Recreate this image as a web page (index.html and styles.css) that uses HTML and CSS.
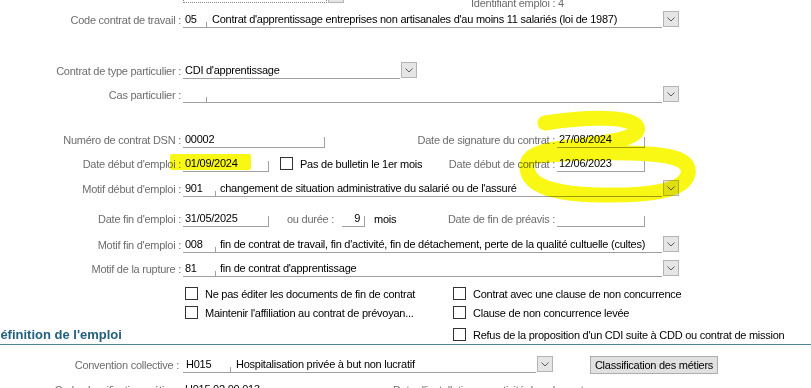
FILE: index.html
```html
<!DOCTYPE html>
<html>
<head>
  <title>Contrat - emploi</title>
  <link rel="stylesheet" href="styles.css">
</head>
<body>
  <div class="form">

    <div class="row row-top">
      <div class="label"></div>
      <div class="dotted"></div>
      <div class="drop"><svg width="8" height="5"><path d="M0.5 0.5 L4 4 L7.5 0.5" /></svg></div>
      <div class="ident">Identifiant emploi : 4</div>
    </div>

    <div class="row r1">
      <div class="label">Code contrat de travail :</div>
      <div class="f code code-sm">05</div>
      <div class="f desc">Contrat d'apprentissage entreprises non artisanales d'au moins 11 salariés (loi de 1987)</div>
      <div class="drop"><svg width="8" height="5"><path d="M0.5 0.5 L4 4 L7.5 0.5" /></svg></div>
    </div>

    <div class="row r2">
      <div class="label">Contrat de type particulier :</div>
      <div class="f type-part">CDI d'apprentissage</div>
      <div class="drop"><svg width="8" height="5"><path d="M0.5 0.5 L4 4 L7.5 0.5" /></svg></div>
    </div>

    <div class="row r3">
      <div class="label">Cas particulier :</div>
      <div class="f code code-sm"></div>
      <div class="f desc"></div>
      <div class="drop"><svg width="8" height="5"><path d="M0.5 0.5 L4 4 L7.5 0.5" /></svg></div>
    </div>

    <div class="row r4 with-right">
      <div class="label">Numéro de contrat DSN :</div>
      <div class="f tick num-dsn">00002</div>
      <div class="rlabel">Date de signature du contrat :</div>
      <div class="f tick date-r">27/08/2024</div>
    </div>

    <div class="row r5 with-right">
      <div class="label">Date début d'emploi :</div>
      <div class="f tick date">01/09/2024</div>
      <div class="check check-inline"><span class="box"></span>Pas de bulletin le 1er mois</div>
      <div class="rlabel">Date début de contrat :</div>
      <div class="f tick date-r">12/06/2023</div>
    </div>

    <div class="row r6">
      <div class="label">Motif début d'emploi :</div>
      <div class="f code code-md">901</div>
      <div class="f desc">changement de situation administrative du salarié ou de l'assuré</div>
      <div class="drop"><svg width="8" height="5"><path d="M0.5 0.5 L4 4 L7.5 0.5" /></svg></div>
    </div>

    <div class="row r7 with-right">
      <div class="label">Date fin d'emploi :</div>
      <div class="f tick date">31/05/2025</div>
      <div class="ou">ou durée :</div>
      <div class="f tick duree">9</div>
      <div class="mois">mois</div>
      <div class="rlabel">Date de fin de préavis :</div>
      <div class="f tick date-r"></div>
    </div>

    <div class="row r8">
      <div class="label">Motif fin d'emploi :</div>
      <div class="f code code-md">008</div>
      <div class="f desc">fin de contrat de travail, fin d'activité, fin de détachement, perte de la qualité cultuelle (cultes)</div>
      <div class="drop"><svg width="8" height="5"><path d="M0.5 0.5 L4 4 L7.5 0.5" /></svg></div>
    </div>

    <div class="row r9">
      <div class="label">Motif de la rupture :</div>
      <div class="f code code-md">81</div>
      <div class="f desc">fin de contrat d'apprentissage</div>
      <div class="drop"><svg width="8" height="5"><path d="M0.5 0.5 L4 4 L7.5 0.5" /></svg></div>
    </div>

    <div class="row cb1">
      <div class="label"></div>
      <div class="check col1"><span class="box"></span>Ne pas éditer les documents de fin de contrat</div>
      <div class="check"><span class="box"></span>Contrat avec une clause de non concurrence</div>
    </div>

    <div class="row cb2">
      <div class="label"></div>
      <div class="check col1"><span class="box"></span>Maintenir l'affiliation au contrat de prévoyan...</div>
      <div class="check"><span class="box"></span>Clause de non concurrence levée</div>
    </div>

    <div class="row section">
      <div class="section-title">Définition de l'emploi</div>
      <div class="check"><span class="box"></span>Refus de la proposition d'un CDI suite à CDD ou contrat de mission</div>
    </div>

    <div class="row r10">
      <div class="label conv">Convention collective :</div>
      <div class="f code code-lg">H015</div>
      <div class="f desc conv-desc">Hospitalisation privée à but non lucratif</div>
      <div class="drop"><svg width="8" height="5"><path d="M0.5 0.5 L4 4 L7.5 0.5" /></svg></div>
      <button class="btn">Classification des métiers</button>
    </div>

    <div class="row r11">
      <div class="label conv">Code classification métier :</div>
      <div class="f metier">H015.02.00.013</div>
      <div class="rlabel-left">Date d'installation en activité dans le poste :</div>
    </div>

  </div>

  <!-- surlignage au feutre par dessus la capture -->
  <svg class="marker" width="811" height="388">
    <rect x="170" y="154" width="81" height="16" rx="2" />
    <path d="M545,123 C590,116 628,117 636,125 C642,133 630,139 600,143 C560,148 528,150 527,165 C526,184 548,194 600,195 C650,196 684,191 688,174 C691,158 668,154 630,153 C590,152 560,154 535,156" />
  </svg>
</body>
</html>
```

FILE: styles.css
```css
body {
  margin: 0;
  width: 811px;
  height: 388px;
  overflow: hidden;
  background: #fff;
  font-family: "Liberation Sans", Arial, sans-serif;
  font-size: 11px;
  letter-spacing: -0.25px;
  color: #000;
  position: relative;
}
.row {
  display: flex;
  align-items: center;
  height: 17px;
  white-space: nowrap;
}
.with-right {
  padding-right: 166px;
}
.label {
  width: 181px;
  flex: none;
  text-align: right;
  color: #6d6d6d;
}
.label.conv {
  width: 179px;
  margin-right: 2px;
}
.rlabel {
  flex: 1;
  text-align: right;
  color: #6d6d6d;
}
.rlabel-left {
  color: #6d6d6d;
  margin-left: 90px;
}

/* vertical rhythm of the form */
.row-top { margin-top: -14px; }
.r1 { margin-top: 8px; }
.r2 { margin-top: 34px; }
.r3 { margin-top: 7px; }
.r4 { margin-top: 28px; }
.r5 { margin-top: 7px; }
.r6 { margin-top: 8px; }
.r7 { margin-top: 13px; }
.r8 { margin-top: 9px; }
.r9 { margin-top: 7px; }
.cb1 { margin-top: 8px; }
.cb2 { margin-top: 2px; }
.section { margin-top: 3px; }
.r10 { margin-top: 11px; }
.r11 { margin-top: 8px; }

/* fields */
.f {
  height: 17px;
  box-sizing: border-box;
  border-bottom: 1px solid #a0a0a0;
  padding-left: 2px;
  line-height: 17px;
  overflow: hidden;
  flex: none;
  margin-left: 2px;
}
.f + .f {
  margin-left: 0;
}
.tick {
  background: linear-gradient(#a0a0a0, #a0a0a0) no-repeat right bottom / 1px 10px;
}
.code {
  background: linear-gradient(#a0a0a0, #a0a0a0) no-repeat right bottom / 1px 5px;
}
.code-sm { width: 24px; }
.code-md { width: 33px; }
.code-lg { width: 48px; padding-left: 3px; }
.desc {
  flex: none;
  width: 446px;
  padding-left: 4px;
}
.code-sm + .desc { width: 455px; padding-left: 5px; }
.conv-desc { width: 305px; padding-left: 5px; }
.type-part { width: 217px; }
.num-dsn { width: 142px; }
.date { width: 86px; }
.date-r { width: 88px; }
.duree {
  width: 23px;
  margin-left: 8px;
  padding-right: 5px;
  text-align: right;
}
.metier { width: 120px; }
.ou {
  margin-left: 18px;
  color: #6d6d6d;
}
.mois {
  margin-left: 9px;
}

.dotted {
  width: 144px;
  height: 17px;
  box-sizing: border-box;
  margin-left: 2px;
  border: 1px dotted #8a8a8a;
}
.ident {
  align-self: flex-end;
  line-height: 13px;
  margin-bottom: -7px;
  margin-left: 127px;
  color: #6d6d6d;
}

/* drop-down button */
.drop {
  width: 16px;
  height: 16px;
  box-sizing: border-box;
  flex: none;
  align-self: flex-end;
  margin-left: 1px;
  margin-bottom: 1px;
  background: #e5e5e5;
  border: 1px solid #b4b4b4;
  display: flex;
  align-items: center;
  justify-content: center;
}
.drop svg path {
  fill: none;
  stroke: #5a5a5a;
  stroke-width: 1;
}
.row-top .drop {
  margin-bottom: 0;
}

/* checkboxes */
.check {
  display: flex;
  align-items: center;
}
.check .box {
  width: 13px;
  height: 13px;
  box-sizing: border-box;
  border: 1px solid #333;
  background: #fff;
  margin-right: 7px;
}
.check-inline {
  margin-left: 11px;
}
.col1 {
  width: 268px;
  margin-left: 4px;
}

/* section header */
.section {
  height: 21px;
  box-sizing: border-box;
  border-bottom: 1px solid #4d8497;
  align-items: center;
  padding-top: 1px;
}
.section-title {
  width: 453px;
  margin-left: -9px;
  padding-right: 9px;
  font-size: 13px;
  font-weight: bold;
  letter-spacing: 0;
  color: #22607e;
  flex: none;
  box-sizing: border-box;
}
.section .check {
  margin-left: 9px;
}

.btn {
  margin-left: 37px;
  height: 18px;
  width: 128px;
  padding: 0;
  font-family: "Liberation Sans", Arial, sans-serif;
  font-size: 11px;
  letter-spacing: -0.25px;
  color: #000;
  background: #e1e1e1;
  border: 1px solid #adadad;
  border-radius: 0;
  align-self: flex-start;
}

.marker {
  position: absolute;
  left: 0;
  top: 0;
  pointer-events: none;
  mix-blend-mode: multiply;
}
.marker rect {
  fill: #f8f814;
}
.marker path {
  fill: none;
  stroke: #f8f814;
  stroke-width: 15;
  stroke-linecap: round;
  stroke-linejoin: round;
}
```
